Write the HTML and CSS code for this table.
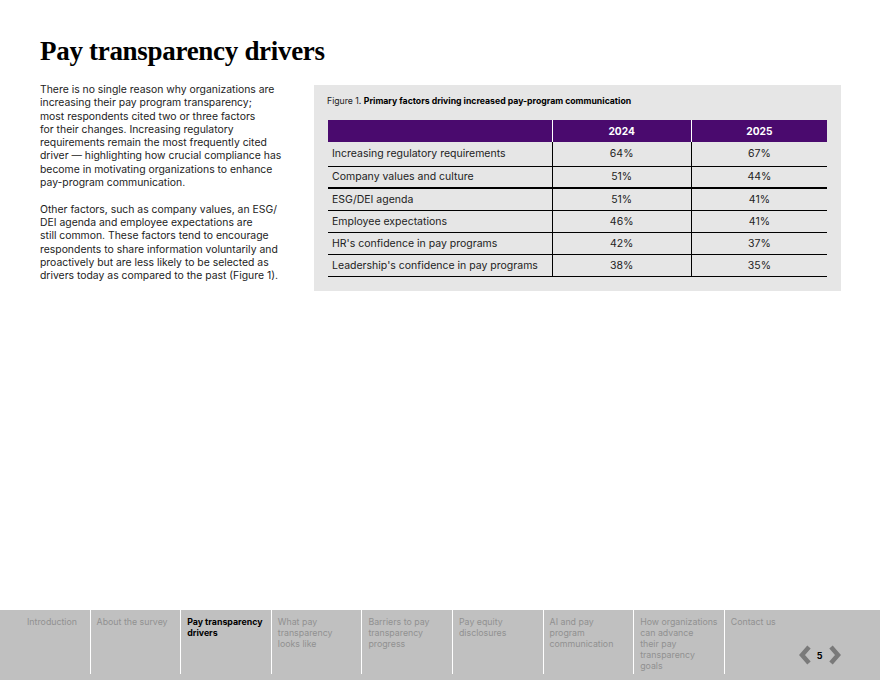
FILE: index.html
```html
<!DOCTYPE html>
<html lang="en">
<head>
<meta charset="utf-8">
<title>Pay transparency drivers</title>
<link rel="stylesheet" href="styles.css">
</head>
<body>
<div class="page">
  <main class="main">
    <h1 class="title">Pay transparency drivers</h1>
    <div class="content">
      <div class="text">
        <p>There is no single reason why organizations are<br>increasing their pay program transparency;<br>most respondents cited two or three factors<br>for their changes. Increasing regulatory<br>requirements remain the most frequently cited<br>driver — highlighting how crucial compliance has<br>become in motivating organizations to enhance<br>pay-program communication.</p>
        <p>Other factors, such as company values, an ESG/<br>DEI agenda and employee expectations are<br>still common. These factors tend to encourage<br>respondents to share information voluntarily and<br>proactively but are less likely to be selected as<br>drivers today as compared to the past (Figure 1).</p>
      </div>
      <figure class="panel">
        <figcaption class="caption">Figure 1. <b>Primary factors driving increased pay-program communication</b></figcaption>
        <table class="tbl">
          <thead>
            <tr><th class="c-label"></th><th>2024</th><th>2025</th></tr>
          </thead>
          <tbody>
            <tr><td class="c-label">Increasing regulatory requirements</td><td>64%</td><td>67%</td></tr>
            <tr class="thick"><td class="c-label">Company values and culture</td><td>51%</td><td>44%</td></tr>
            <tr><td class="c-label">ESG/DEI agenda</td><td>51%</td><td>41%</td></tr>
            <tr><td class="c-label">Employee expectations</td><td>46%</td><td>41%</td></tr>
            <tr><td class="c-label">HR's confidence in pay programs</td><td>42%</td><td>37%</td></tr>
            <tr><td class="c-label">Leadership's confidence in pay programs</td><td>38%</td><td>35%</td></tr>
          </tbody>
        </table>
      </figure>
    </div>
  </main>
  <nav class="nav">
    <div class="nav-item first">Introduction</div>
    <div class="nav-item">About the survey</div>
    <div class="nav-item active">Pay transparency<br>drivers</div>
    <div class="nav-item">What pay<br>transparency<br>looks like</div>
    <div class="nav-item">Barriers to pay<br>transparency<br>progress</div>
    <div class="nav-item">Pay equity<br>disclosures</div>
    <div class="nav-item">AI and pay<br>program<br>communication</div>
    <div class="nav-item">How organizations<br>can advance<br>their pay<br>transparency<br>goals</div>
    <div class="nav-item last">
      <span>Contact us</span>
      <div class="pager">
        <svg class="chev" width="14" height="20" viewBox="0 0 14 20"><path d="M11 2 L4 10 L11 18" fill="none" stroke="#7a7a7a" stroke-width="4.5" stroke-linejoin="miter"/></svg>
        <span class="pnum">5</span>
        <svg class="chev" width="14" height="20" viewBox="0 0 14 20"><path d="M3 2 L10 10 L3 18" fill="none" stroke="#7a7a7a" stroke-width="4.5" stroke-linejoin="miter"/></svg>
      </div>
    </div>
  </nav>
</div>
</body>
</html>
```

FILE: styles.css
```css
* { box-sizing: border-box; }
html, body { margin: 0; padding: 0; background: #fff; }
body { font-family: Inter, "Liberation Sans", Arial, sans-serif; color: #1a1a1a; }
.page { width: 880px; height: 680px; display: flex; flex-direction: column; }
.main { flex: 1; padding: 34px 39px 0 40px; }
.title {
  margin: 0;
  font-family: "Liberation Serif", "Times New Roman", serif;
  font-weight: 700;
  font-size: 27px;
  line-height: 34px;
  letter-spacing: -0.3px;
  color: #000;
}
.content { display: flex; gap: 25px; margin-top: 15px; align-items: flex-start; }
.text { width: 249px; font-size: 10.4px; line-height: 13.3px; color: #222; white-space: nowrap; }
.text p { margin: 0 0 13.3px; }
.panel { margin: 2px 0 0; width: 527px; background: #e6e6e6; padding: 11px 14px 14px 13px; }
.caption { font-size: 8.7px; line-height: 11px; color: #222; margin: 0 0 13px; }
.caption b { font-weight: 700; color: #000; }
.tbl { width: 499px; margin-left: 1px; border-collapse: collapse; font-size: 10.5px; }
.tbl th {
  background: #4a0a6e; color: #fff; font-weight: 700; height: 22px; padding: 0;
  border-left: 1px solid #fff; text-align: center; font-size: 10.2px;
}
.tbl th:first-child { border-left: none; }
.tbl td {
  height: 22px; padding: 0; text-align: center; border-left: 1px solid #000;
  border-bottom: 1px solid #000; color: #222;
}
.tbl td.c-label { border-left: none; text-align: left; padding-left: 4px; width: 224px; }
.tbl th.c-label { width: 224px; }
.tbl tbody tr:first-child td { height: 24px; }
.tbl tr.thick td { border-bottom: 2px solid #000; }
.nav { height: 70px; background: #c0c0c0; display: flex; padding-bottom: 6px; }
.nav-item {
  width: 90.6px; border-right: 1px solid #fff; padding: 6px 6px 0; font-size: 8.8px;
  line-height: 11px; color: #919191; white-space: nowrap;
}
.nav-item.first { padding-left: 27px; }
.nav-item.active { color: #000; font-weight: 700; }
.nav-item.last { flex: 1; border-right: none; position: relative; }
.pager { position: absolute; left: 73px; top: 35px; display: flex; align-items: center; gap: 3px; }
.pnum { font-size: 9px; font-weight: 700; color: #000; width: 10px; text-align: center; }
.chev { display: block; }
```
